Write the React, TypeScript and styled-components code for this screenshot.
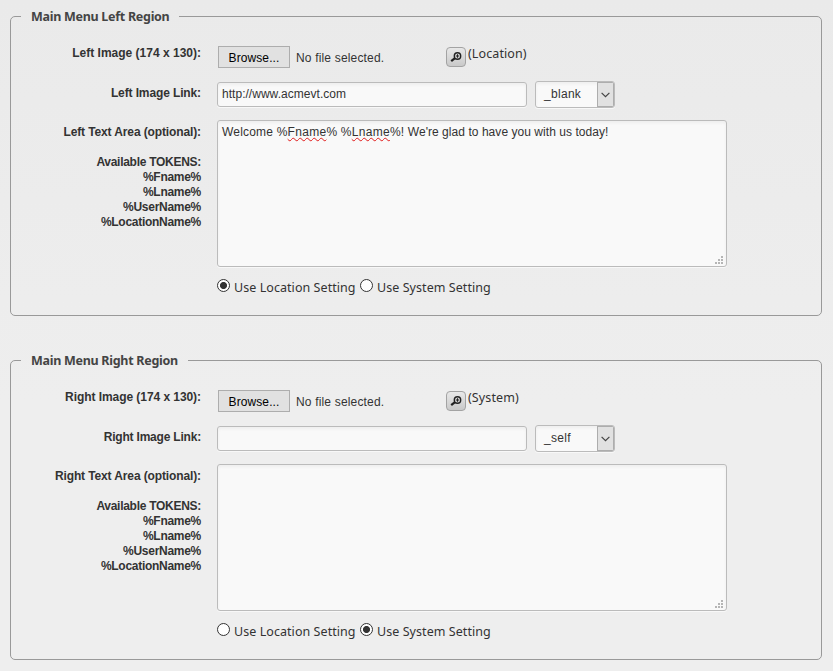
import React, { useState } from 'react';
import styled, { createGlobalStyle } from 'styled-components';

const GlobalStyle = createGlobalStyle`
  * { box-sizing: border-box; }
  body {
    margin: 0;
    background: linear-gradient(#eaeaea, #eeeeee 400px);
    min-height: 671px;
    overflow: hidden;
    font: 12px/15px 'Liberation Sans', Arial, sans-serif;
    color: #333;
  }
`;

const Page = styled.main`
  display: flex;
  flex-direction: column;
  gap: 34px;
  padding: 6px 11px 0 10px;
`;

const Region = styled.fieldset`
  height: 310px;
  min-width: 0;
  margin: 0;
  padding: 0;
  border: 1px solid #999;
  border-radius: 5px;
`;

const Title = styled.legend<{ $width: number }>`
  width: ${(p) => p.$width}px;
  height: 21px;
  margin-left: 10px;
  padding: 0 0 0 10px;
  font: bold 12.5px/21px 'Noto Sans', sans-serif;
  letter-spacing: -0.28px;
  white-space: nowrap;
  color: #444;
`;

const Row = styled.div<{ $height: number; $offset?: number }>`
  display: grid;
  grid-template-columns: 190px 1fr;
  column-gap: 16px;
  align-items: start;
  height: ${(p) => p.$height}px;
  margin-top: ${(p) => p.$offset ?? 0}px;
`;

const Label = styled.div<{ $top: number; $spacing?: number }>`
  padding-top: ${(p) => p.$top}px;
  text-align: right;
  font-weight: bold;
  letter-spacing: ${(p) => p.$spacing ?? 0}px;
  white-space: nowrap;
`;

const Tokens = styled.div`
  margin-top: 15px;
  letter-spacing: -0.28px;
`;

const Controls = styled.div`
  display: flex;
  align-items: flex-start;
`;

const Browse = styled.button`
  width: 72px;
  height: 22px;
  margin: 3px 6px 0 1px;
  padding: 2px 0 0;
  border: 1px solid #adadad;
  background: #e1e1e1;
  font: 12px/18px 'Liberation Sans', Arial, sans-serif;
  letter-spacing: 0.1px;
  color: #000;
`;

const FileName = styled.span`
  width: 150px;
  padding-top: 8px;
  letter-spacing: 0.17px;
`;

const Preview = styled.button`
  display: flex;
  align-items: center;
  justify-content: center;
  width: 20px;
  height: 20px;
  margin: 4px 2px 0 0;
  padding: 0;
  border: 1px solid #a3a3a3;
  border-radius: 4px;
  background: linear-gradient(#e8e8e8, #c9c9c9);
`;

const Source = styled.span`
  padding-top: 2px;
  font: 12.5px/17px 'Noto Sans', sans-serif;
  letter-spacing: 0.1px;
`;

const LinkInput = styled.input`
  width: 310px;
  height: 25px;
  margin: 1px 8px 0 0;
  padding: 0 4px 1px;
  border: 1px solid #bbb;
  border-radius: 3px;
  outline: none;
  background: #f9f9f9;
  box-shadow: inset 0 2px 3px #eee, 0 1px 0 #f8f8f8;
  font: 12px 'Liberation Sans', Arial, sans-serif;
  letter-spacing: 0.03px;
  color: #333;
`;

const Select = styled.button`
  display: flex;
  justify-content: space-between;
  width: 80px;
  height: 27px;
  padding: 0 0 0 8px;
  border: 1px solid #bbb;
  border-radius: 3px;
  background: #f9f9f9;
  box-shadow: inset 0 2px 3px #eee, 0 1px 0 #f8f8f8;
  font: 12px/24px 'Liberation Sans', Arial, sans-serif;
  letter-spacing: 0.3px;
  color: #333;
  overflow: hidden;
`;

const Arrow = styled.span`
  display: flex;
  align-items: center;
  justify-content: center;
  width: 17px;
  height: 25px;
  border: 1px solid #adadad;
  background: #e1e1e1;
`;

const TextBox = styled.div`
  display: flex;
  flex-direction: column;
  justify-content: space-between;
  width: 510px;
  height: 147px;
  padding: 4px 3px 2px 4px;
  border: 1px solid #bbb;
  border-radius: 3px;
  background: #f9f9f9;
  box-shadow: inset 0 2px 3px #eee, 0 1px 0 #f8f8f8;
`;

const Message = styled.div`
  min-height: 15px;
  letter-spacing: 0.05px;
  white-space: pre;
`;

const Greeting = styled.span`
  letter-spacing: 0.2px;
`;

const Misspelled = styled.span`
  letter-spacing: 0.3px;
  text-decoration: underline wavy #e01b1b 1px;
  text-decoration-skip-ink: none;
  text-underline-offset: 1px;
`;

const Grip = styled.svg`
  align-self: flex-end;
  fill: #b5b5b5;
`;

const Options = styled.div`
  display: flex;
  padding-left: 206px;
`;

const Option = styled.label`
  display: flex;
  width: 143px;
  font: 12.5px/19px 'Noto Sans', sans-serif;
  letter-spacing: 0.06px;
  white-space: nowrap;
`;

const Radio = styled.input`
  appearance: none;
  flex: none;
  width: 13px;
  height: 13px;
  margin: 1px 4px 0 0;
  border: 1px solid #333;
  border-radius: 50%;
  background: #fff;
  &:checked {
    background: radial-gradient(circle, #333 3.1px, #fff 3.9px);
  }
`;

const Magnifier = () => (
  <svg width="12" height="12" viewBox="0 0 12 12" fill="none" stroke="#222">
    <circle cx="7.5" cy="5" r="3.2" strokeWidth="1.4" />
    <path d="M5.8 5h3.4M7.5 3.3v3.4" strokeWidth="1.1" />
    <path d="M5 7.2L1.2 10.2" strokeWidth="2.2" />
  </svg>
);

interface RegionProps {
  side: 'Left' | 'Right';
  titleWidth: number;
  link: string;
  target: string;
  source: 'Location' | 'System';
  message?: React.ReactNode;
}

const MenuRegion = ({ side, titleWidth, link, target, source, message }: RegionProps) => {
  const [setting, setSetting] = useState(source);
  return (
    <Region>
      <Title $width={titleWidth}>Main Menu {side} Region</Title>
      <Row $height={38} $offset={16}>
        <Label $top={3} $spacing={side === 'Right' ? -0.06 : 0}>{side} Image (174 x 130):</Label>
        <Controls>
          <Browse>Browse...</Browse>
          <FileName>No file selected.</FileName>
          <Preview aria-label="Preview image"><Magnifier /></Preview>
          <Source>({source})</Source>
        </Controls>
      </Row>
      <Row $height={39}>
        <Label $top={5} $spacing={side === 'Right' ? -0.2 : -0.12}>{side} Image Link:</Label>
        <Controls>
          <LinkInput defaultValue={link} />
          <Select>
            {target}
            <Arrow>
              <svg width="9" height="6" viewBox="0 0 9 6" fill="none" stroke="#444" strokeWidth="1.2">
                <path d="M.6.8l3.9 3.9L8.4.8" />
              </svg>
            </Arrow>
          </Select>
        </Controls>
      </Row>
      <Row $height={158}>
        <Label $top={5} $spacing={-0.12}>
          {side} Text Area (optional):
          <Tokens>
            Available TOKENS:<br />%Fname%<br />%Lname%<br />%UserName%<br />%LocationName%
          </Tokens>
        </Label>
        <TextBox>
          <Message>{message}</Message>
          <Grip width="8" height="8" viewBox="0 0 8 8">
            <path d="M6 0h2v2H6zM3 3h2v2H3zM6 3h2v2H6zM0 6h2v2H0zM3 6h2v2H3zM6 6h2v2H6z" />
          </Grip>
        </TextBox>
      </Row>
      <Options>
        {(['Location', 'System'] as const).map((name) => (
          <Option key={name}>
            <Radio type="radio" name={side} checked={setting === name} onChange={() => setSetting(name)} />
            Use {name} Setting
          </Option>
        ))}
      </Options>
    </Region>
  );
};

const App = () => (
  <>
    <GlobalStyle />
    <Page>
      <MenuRegion
        side="Left"
        titleWidth={158}
        link="http://www.acmevt.com"
        target="_blank"
        source="Location"
        message={
          <>
            <Greeting>
              Welcome %<Misspelled>Fname</Misspelled>% %<Misspelled>Lname</Misspelled>%!
            </Greeting>
            {" We're glad to have you with us today!"}
          </>
        }
      />
      <MenuRegion side="Right" titleWidth={167} link="" target="_self" source="System" />
    </Page>
  </>
);

export default App;
